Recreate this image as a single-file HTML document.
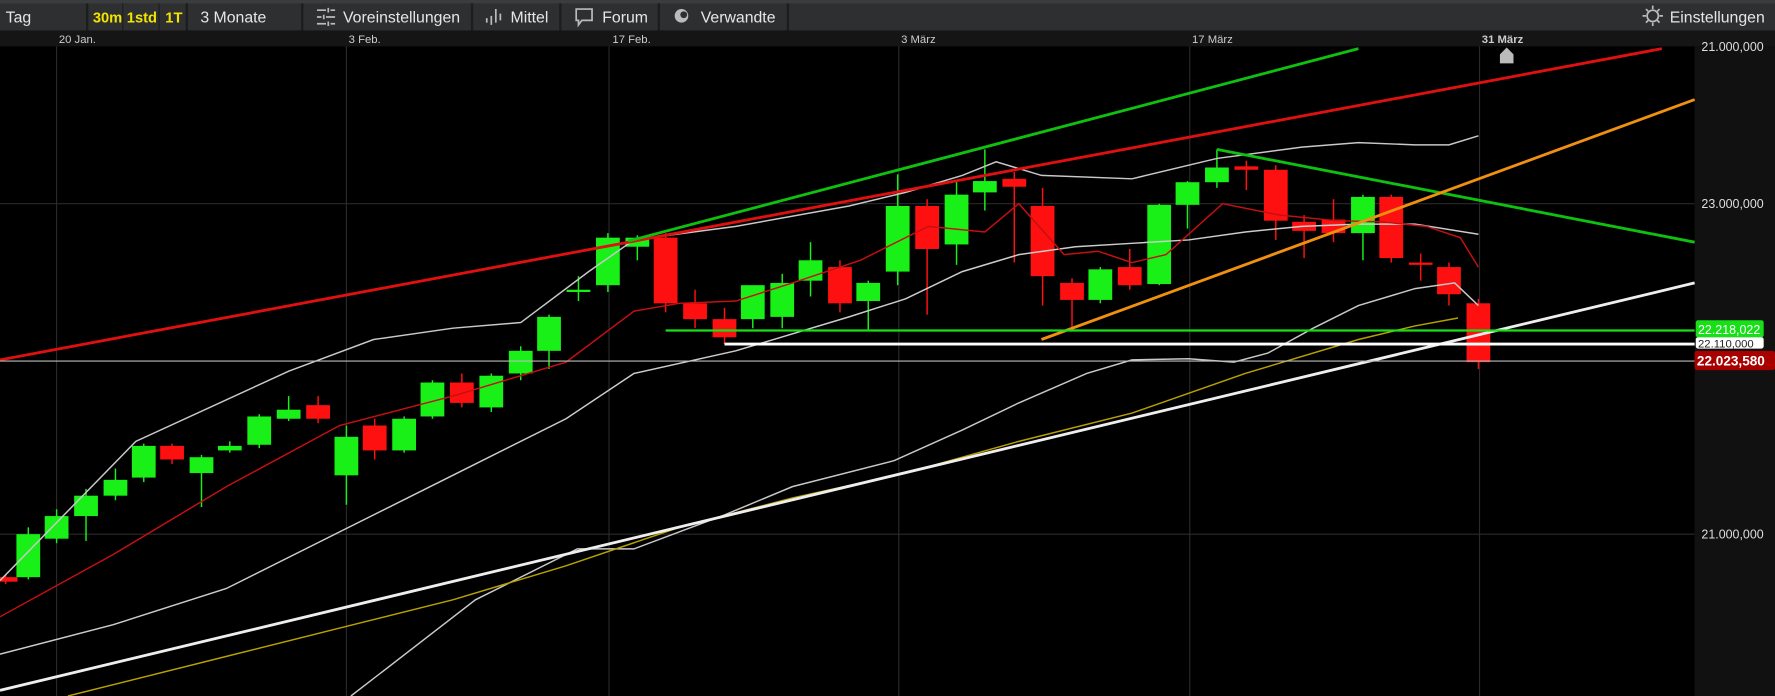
<!DOCTYPE html><html><head><meta charset="utf-8"><style>
html,body{margin:0;padding:0;background:#000;width:1775px;height:696px;overflow:hidden}
svg{display:block}
text{font-family:"Liberation Sans",sans-serif}
</style></head><body>
<svg id="s" width="1775" height="696" viewBox="0 0 1568 615" preserveAspectRatio="none" xmlns="http://www.w3.org/2000/svg">
<rect width="1568" height="615" fill="#000"/>
<rect x="0" y="0" width="1568" height="27" fill="#2d2f31"/>
<rect x="0" y="0" width="1568" height="3" fill="#3a3c3e"/>
<g fill="#1c1d1e">
<rect x="76" y="3" width="2" height="24"/><rect x="108" y="3" width="1" height="24"/><rect x="140" y="3" width="1" height="24"/><rect x="164" y="3" width="2" height="24"/><rect x="266" y="3" width="2" height="24"/><rect x="416" y="3" width="2" height="24"/><rect x="494" y="3" width="2" height="24"/><rect x="581" y="3" width="2" height="24"/><rect x="695" y="3" width="2" height="24"/>
</g>
<g font-size="14" fill="#e6e6e6">
<text x="5" y="20">Tag</text>
<text x="82" y="20" fill="#f2e400" font-weight="bold" font-size="13">30m</text>
<text x="112" y="20" fill="#f2e400" font-weight="bold" font-size="13">1std</text>
<text x="146" y="20" fill="#f2e400" font-weight="bold" font-size="13">1T</text>
<text x="177" y="20">3 Monate</text>
<text x="303" y="20">Voreinstellungen</text>
<text x="451" y="20">Mittel</text>
<text x="532" y="20">Forum</text>
<text x="619" y="20">Verwandte</text>
<text x="1475" y="20">Einstellungen</text>
</g>
<g stroke="#bbb" stroke-width="1.5" fill="none">
<path d="M280 9h8M292 9h4M280 15h4M288 15h8M280 21h8M292 21h4M290 7v4M286 13v4M290 19v4"/>
<path d="M430 20v-4M434 22v-8M438 20v-12M442 18v-6"/>
<path d="M509 8h14v10h-9l-3 4v-4h-2z"/>
<circle cx="1460" cy="14" r="5"/><path d="M1460 5v3M1460 20v3M1451 14h3M1466 14h3M1454 8l2 2M1464 18l2 2M1454 20l2-2M1464 10l2-2"/>
</g>
<circle cx="602" cy="14" r="6" fill="#bbb"/><circle cx="604" cy="13" r="3" fill="#2d2f31"/>
<rect x="0" y="27" width="1568" height="14" fill="#151515"/>
<g font-size="10" fill="#ccc"><text x="52" y="38">20 Jan.</text><text x="308" y="38">3 Feb.</text><text x="541" y="38">17 Feb.</text><text x="796" y="38">3 März</text><text x="1053" y="38">17 März</text><text x="1309" y="38" font-weight="bold">31 März</text></g>
<rect x="1497" y="41" width="71" height="574" fill="#111"/>
<g stroke="#2a2a2a" stroke-width="1">
<path d="M50 41V615M306 41V615M538 41V615M794 41V615M1051 41V615M1307 41V615M0 180H1497M0 472H1497"/>
</g>
<g font-size="11" fill="#ddd"><text x="1503" y="45">21.000,000</text><text x="1503" y="184">23.000,000</text><text x="1503" y="476">21.000,000</text></g>
<path d="M1325 48l6-6 6 6v8h-12z" fill="#bbb"/>
<g id="c"></g>
<g fill="none" stroke-width="1.3">
<path d="M0 578L100 552L200 520L300 470L400 420L500 370L560 330L650 310L750 280L800 264L850 240L900 225L950 218L1000 215L1050 212L1100 205L1150 200L1200 198L1250 198L1306 207" stroke="#ccc"/>
<path d="M0 545L100 490L200 430L300 376L400 350L500 320L560 275L600 268L650 266L700 250L760 230L820 200L870 205L900 180L940 225L970 222L1000 232L1030 225L1080 180L1130 190L1180 195L1220 196L1260 200L1290 210L1306 236" stroke="#c41010"/>
<path d="M0 513L120 390L255 328L330 300L400 290L460 285L520 240L560 212L650 200L750 182L800 170L850 155L880 143L920 155L1000 158L1075 140L1150 130L1200 126L1250 128L1280 128L1306 120" stroke="#c8c8c8"/>
<path d="M310 615L420 530L510 485L560 485L640 455L700 430L790 407L850 380L900 356L960 330L1000 318L1050 317L1090 320L1120 312L1160 290L1200 270L1250 255L1285 250L1306 270" stroke="#c8c8c8"/>
<path d="M60 615L200 580L300 555L400 530L500 500L600 466L700 440L800 418L900 390L1000 365L1100 330L1200 300L1250 288L1288 281" stroke="#b8a000"/>
<path d="M0 318L1468 43" stroke="#e01010" stroke-width="2.5"/>
<path d="M555 213L1200 43" stroke="#10c010" stroke-width="2.5"/>
<path d="M1075 132L1497 214" stroke="#10c010" stroke-width="2.5"/>
<path d="M920 300L1497 88" stroke="#f09010" stroke-width="2.5"/>
<path d="M0 610L1497 250" stroke="#eee" stroke-width="2.5"/>
<path d="M588 292H1497" stroke="#18e018" stroke-width="2"/>
<path d="M640 304H1497" stroke="#fff" stroke-width="2.5"/>
<path d="M0 319H1497" stroke="#bbb" stroke-width="1"/>
</g>
<rect x="1498" y="283" width="60" height="15" rx="2" fill="#18e018"/><text x="1500" y="295" font-size="11" fill="#fff">22.218,022</text>
<rect x="1498" y="298" width="60" height="10" rx="2" fill="#fff"/><text x="1500" y="307" font-size="10" fill="#222">22.110,000</text>
<rect x="1497" y="310" width="71" height="17" rx="2" fill="#a80000"/><text x="1499" y="323" font-size="12" font-weight="bold" fill="#fff">22.023,580</text>
</svg>
<script>
var d=[[5,'r',510,514,508,516],[25,'g',472,510,466,512],[50,'g',456,476,450,480],[76,'g',438,456,432,478],[102,'g',424,438,414,442],[127,'g',394,422,392,426],[152,'r',394,406,392,410],[178,'g',404,418,402,448],[203,'g',394,398,390,400],[229,'g',368,393,366,396],[255,'g',362,370,350,372],[281,'r',358,370,350,374],[306,'g',386,420,376,446],[331,'r',376,398,370,406],[357,'g',370,398,368,400],[382,'g',338,368,336,370],[408,'r',338,356,330,360],[434,'g',332,360,330,364],[460,'g',310,330,306,336],[485,'g',280,310,278,326],[511,'g',256,258,244,266],[537,'g',210,252,206,258],[563,'g',210,218,208,230],[588,'r',210,268,206,276],[614,'r',268,282,256,290],[640,'r',282,298,272,304],[665,'g',252,282,270,290],[691,'g',250,280,242,290],[716,'g',230,248,214,262],[742,'r',236,268,230,276],[767,'g',250,266,248,292],[793,'g',182,240,154,252],[819,'r',182,220,176,278],[845,'g',172,216,160,234],[870,'g',160,170,132,186],[896,'r',158,165,152,232],[921,'r',182,244,166,270],[947,'r',250,265,246,292],[972,'g',238,265,236,268],[998,'r',236,252,220,256],[1024,'g',181,251,180,252],[1049,'g',161,181,160,202],[1075,'g',148,161,132,166],[1101,'r',147,150,142,168],[1127,'r',150,195,146,212],[1152,'r',196,204,190,228],[1178,'r',194,206,176,214],[1204,'g',174,206,172,230],[1229,'r',174,228,172,232],[1255,'r',232,234,224,248],[1280,'r',236,260,232,270],[1306,'r',268,320,264,326]];
var h='';d.forEach(function(c){var col=c[1]=='g'?'#18f018':'#ff1010';h+='<line x1="'+c[0]+'" x2="'+c[0]+'" y1="'+c[4]+'" y2="'+c[5]+'" stroke="'+col+'" stroke-width="1.3"/><rect x="'+(c[0]-10.5)+'" y="'+c[2]+'" width="21" height="'+Math.max(2,c[3]-c[2])+'" fill="'+col+'"/>';});
document.getElementById('c').innerHTML=h;
</script>
</body></html>
